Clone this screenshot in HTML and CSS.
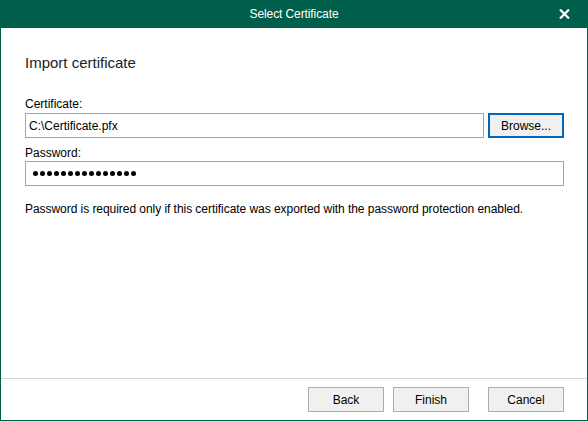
FILE: index.html
```html
<!DOCTYPE html>
<html lang="en">
<head>
    <meta charset="UTF-8">
    <title>Select Certificate</title>
    <link rel="stylesheet" href="styles.css">
</head>
<body>
<div class="window">
    <!-- Title bar -->
    <div class="titlebar">
        <span class="title">Select Certificate</span>
        <span class="close">
            <svg width="11" height="10" viewBox="0 0 11 10">
                <path d="M1 0.5 L10 9.5 M10 0.5 L1 9.5" stroke="#fff" stroke-width="2.2" fill="none"/>
            </svg>
        </span>
    </div>

    <div class="content">
        <div class="heading">Import certificate</div>

        <div class="label">Certificate:</div>
        <div class="row">
            <div class="field grow">C:\Certificate.pfx</div>
            <button class="btn btn-focus">Browse...</button>
        </div>

        <div class="label label-second">Password:</div>
        <div class="field dots">
            <i></i><i></i><i></i><i></i><i></i><i></i><i></i><i></i><i></i><i></i><i></i><i></i><i></i><i></i><i></i>
        </div>

        <div class="note">Password is required only if this certificate was exported with the password protection enabled.</div>
    </div>

    <!-- Bottom buttons -->
    <div class="footer">
        <button class="btn">Back</button>
        <button class="btn">Finish</button>
        <button class="btn btn-cancel">Cancel</button>
    </div>
</div>
</body>
</html>
```

FILE: styles.css
```css
body {
    margin: 0;
    padding: 0;
    font-family: 'Liberation Sans', Arial, sans-serif;
    font-size: 12px;
    color: #000;
    background: #fff;
}

.window {
    width: 588px;
    height: 421px;
    box-sizing: border-box;
    display: flex;
    flex-direction: column;
    border: 1px solid #005f4b;
    border-top: none;
}

.titlebar {
    height: 28px;
    margin: 0 -1px;
    background-color: #005f4b;
    color: #fff;
    display: flex;
    align-items: center;
    justify-content: center;
    position: relative;
}

.title {
    font-size: 12px;
    letter-spacing: -0.1px;
}

.close {
    position: absolute;
    right: 18px;
    top: 9px;
    width: 11px;
    height: 10px;
    display: flex;
}

.content {
    flex: 1;
    padding: 25px 23px 0 24px;
}

.heading {
    font-size: 15px;
    line-height: 20px;
    color: #222;
    margin-bottom: 23px;
}

.label {
    line-height: 16px;
    margin-bottom: 1px;
}

.label-second {
    margin-top: 7px;
    margin-bottom: 0;
}

.row {
    display: flex;
    gap: 4px;
}

.field {
    height: 25px;
    box-sizing: border-box;
    border: 1px solid #a5a5a5;
    padding: 0 3px;
    display: flex;
    align-items: center;
    background: #fff;
}

.grow {
    flex: 1;
}

.dots {
    gap: 2px;
    padding-left: 7px;
}

.dots i {
    width: 5px;
    height: 5px;
    border-radius: 50%;
    background: #000;
}

.note {
    line-height: 16px;
    margin-top: 15px;
    letter-spacing: -0.05px;
}

.footer {
    border-top: 1px solid #d4d4d4;
    padding: 8px 23px 8px 0;
    display: flex;
    justify-content: flex-end;
    gap: 9px;
}

.btn {
    width: 76px;
    height: 25px;
    box-sizing: border-box;
    border: 1px solid #adadad;
    background-color: #f0f0f0;
    font-family: 'Liberation Sans', Arial, sans-serif;
    font-size: 12px;
    color: #000;
    padding: 0;
}

.btn-focus {
    border: 2px solid #0067c0;
}

.btn-cancel {
    margin-left: 10px;
}
```
